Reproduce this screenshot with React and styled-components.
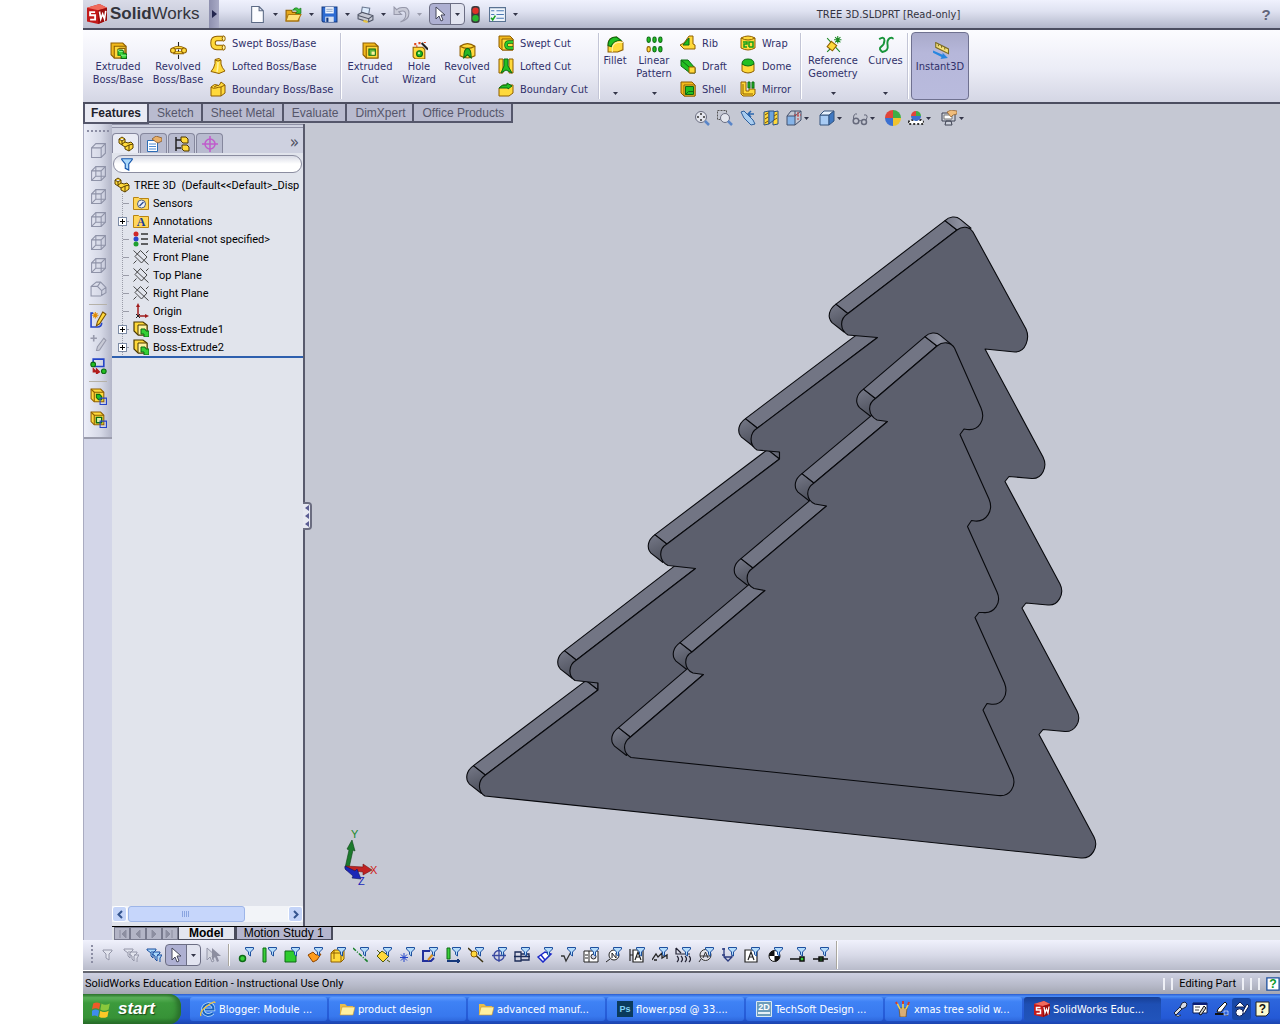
import styled, { createGlobalStyle, css } from "styled-components";

const GlobalStyle = createGlobalStyle`
  * {
    box-sizing: border-box;
  }
  body {
    margin: 0;
    background: #fff;
    font-family: "DejaVu Sans Condensed", "Liberation Sans", sans-serif;
    font-size: 11px;
    color: #000;
  }
  button, input {
    font: inherit;
    color: inherit;
    padding: 0;
    margin: 0;
    border: none;
    background: none;
  }
  svg {
    display: block;
    flex: none;
  }
`;

const Window = styled.div`
  min-height: 100vh;
  margin-left: 83px;
  display: flex;
  flex-direction: column;
  background: #c5c8d3;
`;

/* ---------- title bar ---------- */

const TitleBar = styled.header`
  display: flex;
  align-items: center;
  height: 30px;
  background: linear-gradient(#eff1fd, #dfe2f1 40%, #b3b7ca);
  border-bottom: 2px solid #4c4e60;
`;

const Brand = styled.div`
  display: flex;
  align-items: center;
  gap: 3px;
  width: 126px;
  height: 28px;
  padding-left: 4px;
  background: linear-gradient(#d9dbe8, #bfc2d2);
  font-family: "Liberation Sans", sans-serif;
  font-size: 17px;
  color: #33343c;
`;

const BrandArrow = styled.button`
  display: grid;
  place-items: center;
  width: 10px;
  height: 28px;
  background: linear-gradient(90deg, #8d8fae, #a9abc6);
`;

const QuickTools = styled.nav`
  display: flex;
  align-items: center;
  margin-left: 30px;
`;

const QuickButton = styled.button`
  display: flex;
  align-items: center;
  gap: 7px;
  width: ${(p) => (p.$plain ? 24 : 36)}px;
  padding-left: ${(p) => (p.$plain ? 2 : 0)}px;
`;

const SelectButton = styled.button`
  display: flex;
  align-items: center;
  width: 36px;
  height: 22px;
  border: 1px solid #6c6e84;
  border-radius: 4px;
  background: linear-gradient(90deg, #aeb0d2 20px, #6c6e84 20px, #6c6e84 21px, #e2e4f0 21px);
  padding-left: 2px;
  gap: 7px;
`;

const DocTitle = styled.h1`
  flex: 1;
  margin: 0;
  text-align: center;
  font-size: 11px;
  font-weight: normal;
  color: #333340;
`;

const HelpButton = styled.button`
  width: 28px;
  font-family: "Liberation Sans", sans-serif;
  font-size: 15px;
  font-weight: bold;
  color: #63657a;
`;

/* ---------- ribbon ---------- */

const Ribbon = styled.div`
  display: flex;
  height: 74px;
  padding-left: 5px;
  background: linear-gradient(#fcfcff, #ebecf6 55%, #d4d6e4);
  border-bottom: 2px solid #4c4e60;
  color: #30306a;
`;

const BigTool = styled.button`
  display: flex;
  flex-direction: column;
  align-items: center;
  gap: 1px;
  width: ${(p) => p.$width}px;
  padding: ${(p) => (p.$menu ? "6px 0 7px" : "12px 0 5px")};
  line-height: 13px;
  white-space: nowrap;
  ${(p) =>
    p.$pressed &&
    css`
      height: 68px;
      margin: 2px 0 0 2px;
      padding-top: 9px;
      border: 1px solid #6f7190;
      border-radius: 4px;
      background: linear-gradient(#a9aaca, #b6b7da 30%, #b9bbdd);
    `}
`;

const BigLabel = styled.span`
  flex: 1;
`;

const SmallTools = styled.div`
  display: flex;
  flex-direction: column;
  justify-content: center;
  width: ${(p) => p.$width}px;
  margin-left: ${(p) => p.$gap || 2}px;
`;

const SmallTool = styled.button`
  display: flex;
  align-items: center;
  gap: 6px;
  height: 23px;
  white-space: nowrap;
`;

const Divider = styled.i`
  width: 2px;
  margin: 3px 0;
  background: linear-gradient(90deg, #c3c5d6 1px, #fff 1px);
`;

/* ---------- command tabs ---------- */

const CommandRow = styled.div`
  display: flex;
  height: 20px;
`;

const CommandTabs = styled.nav`
  display: flex;
  width: 611px;
  font-family: "Liberation Sans", sans-serif;
  font-size: 12px;
`;

const CommandTab = styled.button`
  height: ${(p) => (p.$active ? 20 : 19)}px;
  padding: 0 7px 0 8px;
  border: solid #55576b;
  border-width: 0 2px 2px 0;
  background: ${(p) => (p.$active ? "#e9eaf3" : "#b9bbcf")};
  color: ${(p) => (p.$active ? "#22222c" : "#55566a")};
  font-weight: ${(p) => (p.$active ? "bold" : "normal")};
  white-space: nowrap;
  &:first-child {
    border-left-width: 2px;
    padding: 0 6px;
  }
`;

const ViewTools = styled.div`
  display: flex;
  margin-top: 5px;
`;

const ViewTool = styled.button`
  display: flex;
  align-items: center;
  gap: 2px;
  height: 18px;
  width: ${(p) => (p.$menu ? 33 : 23)}px;
`;

/* ---------- workspace ---------- */

const Workspace = styled.div`
  display: flex;
  flex: 1;
`;

const SideBar = styled.aside`
  width: 29px;
  background: #d3d6e8;
  border-left: 1px solid #a9abc0;
`;

const SideTools = styled.div`
  display: flex;
  flex-direction: column;
  align-items: center;
  height: 315px;
  padding-top: 6px;
  background: linear-gradient(90deg, #eceef8, #d5d8e6 60%, #b3b6c8);
  border-bottom: 2px solid #9b9dad;
`;

const Grip = styled.i`
  width: 22px;
  height: 2px;
  margin-bottom: 7px;
  background: repeating-linear-gradient(90deg, #8c8ea4 0 2px, transparent 2px 4px);
`;

const SideTool = styled.button`
  display: grid;
  place-items: center;
  height: 23px;
  width: 23px;
`;

const SideRule = styled.i`
  width: 18px;
  height: 1px;
  margin: 4px 0 3px;
  background: #b5b1a8;
`;

const Main = styled.div`
  display: flex;
  flex-direction: column;
  flex: 1;
  min-width: 0;
`;

const Split = styled.div`
  display: flex;
  flex: 1;
`;

const Panel = styled.section`
  position: relative;
  display: flex;
  flex-direction: column;
  width: 193px;
  background: #e1e4ec;
  border-right: 2px solid #585a6c;
`;

const PanelTabs = styled.div`
  display: flex;
  align-items: flex-end;
  height: 29px;
  border-top: 4px double #8f91a6;
  background: #ced1e0;
`;

const PanelTab = styled.button`
  display: grid;
  place-items: center;
  width: 27px;
  height: 20px;
  margin-right: 1px;
  border: 1px solid #85879d;
  border-bottom: none;
  border-radius: 4px 4px 0 0;
  background: ${(p) => (p.$active ? "#e9ebf4" : "#b8bbcf")};
`;

const MoreButton = styled.button`
  margin-left: auto;
  padding-right: 4px;
  font-size: 17px;
  line-height: 22px;
  color: #505264;
`;

const FilterBox = styled.label`
  display: flex;
  align-items: center;
  height: 18px;
  margin: 2px 1px 3px;
  padding: 0 6px;
  border: 1px solid #8b8da0;
  border-radius: 9px;
  background: linear-gradient(#d9dbe6, #fff 50%);
  input {
    flex: 1;
    min-width: 0;
    outline: none;
  }
`;

const Tree = styled.ul`
  margin: 0;
  padding: 0;
  list-style: none;
  border-bottom: 2px solid #2d5fae;
  font-family: Roboto, "Liberation Sans", sans-serif;
`;

const TreeRow = styled.li`
  display: flex;
  align-items: center;
  gap: 4px;
  height: 18px;
  padding-left: ${(p) => (p.$root ? 2 : 6)}px;
  white-space: pre;
`;

const Branch = styled.span`
  display: grid;
  align-items: center;
  align-self: stretch;
  width: 11px;
  background:
    linear-gradient(#9a9ca8, #9a9ca8) 5px 50% / 6px 1px no-repeat,
    repeating-linear-gradient(#9a9ca8 0 1px, transparent 1px 2px) 4px 0 / 1px 100% no-repeat;
`;

const Expander = styled.button`
  display: grid;
  place-items: center;
  width: 9px;
  height: 9px;
  border: 1px solid #7c8ba5;
  background: #fff;
`;

const ScrollRow = styled.div`
  display: flex;
  height: 16px;
  margin-top: auto;
  margin-bottom: 4px;
  background: #f2f4f8;
`;

const ScrollButton = styled.button`
  display: grid;
  place-items: center;
  width: 15px;
  border: 1px solid #fff;
  border-radius: 3px;
  background: #c4d4f8;
  &:last-child {
    margin-left: auto;
  }
`;

const ScrollThumb = styled.button`
  display: grid;
  place-items: center;
  flex: 0 0 61%;
  margin-left: 1px;
  border: 1px solid #9db5e8;
  border-radius: 3px;
  background: #c6d6fb;
`;

const PanelHandle = styled.button`
  position: absolute;
  right: -9px;
  top: calc(50% - 23px);
  display: grid;
  place-items: center;
  width: 9px;
  height: 28px;
  border: 2px solid #6b6d80;
  border-left: none;
  border-radius: 0 4px 4px 0;
  background: #e6e8f1;
`;

const Viewport = styled.main`
  flex: 1;
  min-width: 0;
  svg {
    width: 100%;
    height: 100%;
  }
`;

const SheetRow = styled.nav`
  display: flex;
  height: 14px;
  border-top: 1px solid #000;
  background: #dfe2e8;
  font-family: "Liberation Sans", sans-serif;
  font-size: 12px;
  line-height: 12px;
`;

const SheetArrow = styled.button`
  display: grid;
  place-items: center;
  width: 16px;
  border: 1px solid #77798c;
  background: #b3b5c6;
  &:first-child {
    margin-left: 2px;
  }
`;

const SheetTab = styled.button`
  padding: 0 ${(p) => (p.$active ? 10 : 7)}px;
  border: solid #4a4c5c;
  border-width: 0 2px 1px 1px;
  background: ${(p) => (p.$active ? "#e4e6f0" : "#b5b6ce")};
  font-weight: ${(p) => (p.$active ? "bold" : "normal")};
  line-height: 13px;
`;

/* ---------- bottom bars ---------- */

const FilterBar = styled.div`
  display: flex;
  align-items: center;
  height: 31px;
  padding-left: 8px;
  background: linear-gradient(#f0f1fc, #d8dae8 50%, #b8bbca);
  border-bottom: 1px solid #fff;
`;

const VerticalGrip = styled.i`
  width: 2px;
  height: 20px;
  margin-right: 3px;
  background: repeating-linear-gradient(#8c8ea4 0 2px, transparent 2px 4px);
`;

const FilterTool = styled.button`
  display: grid;
  place-items: center;
  width: 23px;
  height: 23px;
`;

const BarRule = styled.i`
  width: 2px;
  height: ${(p) => p.$height}px;
  margin: 0 4px;
  background: linear-gradient(90deg, #aaa79f 1px, #fff 1px);
`;

const StatusBar = styled.footer`
  display: flex;
  align-items: center;
  height: 23px;
  padding-left: 2px;
  border-top: 2px solid #63656f;
  background: linear-gradient(#cdd0e2, #b6b9c8 60%, #a3a6b2);
  font-family: Roboto, "Liberation Sans", sans-serif;
  white-space: nowrap;
`;

const StatusCells = styled.div`
  display: flex;
  align-items: center;
  gap: 6px;
  margin-left: auto;
`;

const StatusRule = styled.i`
  width: 2px;
  height: 12px;
  background: #eef0f6;
`;

const TaskBar = styled.nav`
  display: flex;
  height: 30px;
  padding-right: 8px;
  background: linear-gradient(#2a5bd0, #4a8cf5 8%, #2d66dd 18%, #2459d6 80%, #1b44ae);
  color: #fff;
`;

const StartButton = styled.button`
  display: flex;
  align-items: center;
  gap: 7px;
  width: 98px;
  margin-right: 9px;
  padding: 0 0 0 9px;
  border-radius: 0 12px 12px 0;
  background: linear-gradient(#2f7b2f, #5cb25a 12%, #3c9a3c 30%, #379237 80%, #256a26);
  box-shadow: inset -4px 0 5px #2a6f2b;
  font-family: "Liberation Sans", sans-serif;
  font-size: 17px;
  font-weight: bold;
  font-style: italic;
  text-shadow: 1px 1px 1px #1c4a1c;
`;

const Task = styled.button`
  display: flex;
  align-items: center;
  gap: 3px;
  flex: 0 1 137px;
  height: 24px;
  margin: 3px 2px 0 0;
  padding-left: 10px;
  border-radius: 3px;
  white-space: nowrap;
  background: ${(p) =>
    p.$active
      ? "linear-gradient(#173f95, #1e4fb4 30%, #2154bb)"
      : "linear-gradient(#5f9bff, #3f82f5 20%, #3878ee 80%, #2e68dc)"};
`;

const Tray = styled.div`
  display: flex;
  align-items: center;
  justify-content: space-between;
  width: 102px;
  margin-left: auto;
`;

const TrayButton = styled.button`
  display: grid;
  place-items: center;
  width: 19px;
  height: 22px;
  border-radius: 3px;
  background: ${(p) => (p.$pressed ? "#1847a5" : "none")};
`;

/* ---------- icons, drawn on a 16 x 16 grid ---------- */

const gold = "#ffd93b";
const goldDark = "#8f5f00";
const green = "#22c022";
const greenDark = "#0c6a14";

const block = (
  <>
    <path d="M1 1h11l3 3v11H4l-3-3z" fill="#f2b91c" stroke={goldDark} />
    <path d="M4 4h11v11H4z" fill={gold} stroke={goldDark} />
  </>
);

const wireCube = (
  <path d="M1.500 5.500h9v9h-9zM1.500 5.500l4-4h9v9l-4 4M10.500 5.500l4-4" fill="none" stroke="#8f93a8" />
);

const funnel = (
  <path d="M7.500.5h8v1.500l-3 3v4l-2-1.500v-2.500l-3-3z" fill="#b4dcfb" stroke="#1c4f9e" />
);

const cursor = (
  <path d="M4 1v12l3-3 2 5 2-1-2-5h4z" fill="#fff" stroke="#44465a" />
);

const part = (
  <path
    d="M1 3l3-2 3 2v3l3 1 3-1 2 2v4l-4 3-4-2V11L4 9 1 7z M1 3l3 2 3-2M4 5v4M7 6l-3 2M7 11l4-2 4-1M11 9v6"
    fill={gold}
    stroke="#5c4200"
  />
);

const pictures = {
  brand: (
    <>
      <path d="M0 3l10-3 6 3v10l-7 3-9-2z" fill="#c31a1a" />
      <path d="M0 3l10-3 6 3-7 2z" fill="#f06a5c" />
      <path d="M9 5l7-2v10l-7 3z" fill="#9a0d0d" />
      <path d="M6.500 6.500h-4v2.500h4v3.500h-4" fill="none" stroke="#fff" strokeWidth="1.500" />
      <path d="M10 6l1 6 1.500-4 1.500 4 1-6.500" fill="none" stroke="#fff" strokeWidth="1.300" />
    </>
  ),
  page: <path d="M2.500.5h7l4 4v11h-11zM9.500.5v4h4" fill="#fbfcff" stroke="#5c6a85" />,
  open: (
    <>
      <path d="M1 4h5l1 2h6v8H1z" fill="#e7a91c" stroke="#8f5f00" />
      <path d="M3 8h12l-3 6H1z" fill="#ffe27a" stroke="#b07a10" />
      <path d="M7 4q3-4 6-1l2-1v5h-5l1.500-2Q10 3 7 4z" fill="#3ac13a" stroke={greenDark} strokeWidth=".6" />
    </>
  ),
  save: (
    <>
      <path d="M1 1h14v14H2l-1-1z" fill="#2d6bd2" stroke="#153a80" />
      <path d="M4 1h8v6H4z" fill="#f5f8ff" />
      <path d="M5 3h6M5 5h6" stroke="#8ba2c8" />
      <path d="M4 10h8v5H4z" fill="#d6dff0" />
      <path d="M5 11h2v4H5z" fill="#153a80" />
    </>
  ),
  print: (
    <>
      <path d="M4 7l1-6 7 1-1 6z" fill="#dcebfc" stroke="#6a7890" />
      <path d="M1 8l4-2 10 3v4l-4 2-10-3z" fill="#c5c9d4" stroke="#4f5566" />
      <path d="M1 9l10 3 4-3M11 12v3" fill="none" stroke="#4f5566" />
      <path d="M6 14l4 1" stroke="#e7c440" strokeWidth="2" />
    </>
  ),
  undo: (
    <path d="M1 1v7h7L5.500 5.500Q12 3 12 8t-5 7q8-2 8-8T10 1.500Q6 1 3.500 3.500z" fill="#c9cbd8" stroke="#9698aa" />
  ),
  cursor,
  traffic: (
    <>
      <rect x="4" y="0" width="8" height="16" rx="3" fill="#3a3a3c" />
      <circle cx="8" cy="4.500" r="3" fill="#e03028" />
      <circle cx="8" cy="11.500" r="3" fill="#29b52f" />
    </>
  ),
  options: (
    <>
      <path d="M.5 1.500h15v13H.5z" fill="#eef4fb" stroke="#597292" />
      <path d="M7 4.500h7M7 8h7M7 11.500h7M2 4.500h3M2 8h3" stroke="#4b79b4" />
      <path d="M2 11l1.500 2L6 9" fill="none" stroke="#19a01f" strokeWidth="1.500" />
    </>
  ),
  extrude: (
    <>
      {block}
      <path d="M7 7l2-1h5v5" fill="#fff3a0" stroke={goldDark} />
      <path d="M7.500 7.500h4l1 1v2h2l1 1v4h-5v-3h-3z" fill="#35d035" stroke={greenDark} />
      <path d="M7.500 7.500l1.500 1.500h3M10.500 12l1 1h4" stroke="#8af08a" fill="none" />
    </>
  ),
  revolve: (
    <>
      <path d="M3 6.500q5-3 10 0M3 10h10" fill="none" stroke={goldDark} strokeWidth="3" />
      <path d="M3 6.500q5-3 10 0M4 9.800h8" fill="none" stroke={gold} strokeWidth="1.500" />
      <circle cx="2.800" cy="8" r="2.300" fill={gold} stroke={goldDark} />
      <circle cx="13.200" cy="8" r="2.300" fill={gold} stroke={goldDark} />
      <path d="M8 0v4M8 7v2M8 12v4" stroke="#222" />
    </>
  ),
  sweep: (
    <>
      <path d="M14 3.500H7Q3 3.500 3 8t4 4.500h7" fill="none" stroke={goldDark} strokeWidth="5.500" />
      <path d="M14 3.500H7Q3 3.500 3 8t4 4.500h7" fill="none" stroke={gold} strokeWidth="3.500" />
      <ellipse cx="13.700" cy="3.500" rx="1.500" ry="2.500" fill="#fff2a5" stroke={goldDark} />
      <ellipse cx="13.700" cy="12.500" rx="1.500" ry="2.500" fill="#fff2a5" stroke={goldDark} />
    </>
  ),
  loft: (
    <>
      <path d="M5 1.500l4-1 2 1.500v4q1 4 4 7l-6 2.500-8-2q3-3 4-8z" fill={gold} stroke={goldDark} />
      <path d="M5 2l3 1 3-1" fill="none" stroke={goldDark} />
      <path d="M8 4q0 6-1 10" fill="none" stroke="#fff3a0" strokeWidth="1.500" />
    </>
  ),
  boundary: (
    <>
      <path d="M1 6q4-4 6-2t4-3l4 3v8l-4 3H1z" fill={gold} stroke={goldDark} />
      <path d="M1 6q2 2 5 1t5-1l4-2M11 6v9M4 6l4-2" fill="none" stroke={goldDark} />
    </>
  ),
  cut: (
    <>
      {block}
      <path d="M6.500 6.500h6v6h-6z" fill="#62b83c" stroke={greenDark} />
      <path d="M9 9h3v3H9z" fill="#fff3a0" />
    </>
  ),
  hole: (
    <>
      <path d="M2 5h9l2 2v9H4l-2-2z" fill={gold} stroke={goldDark} />
      <circle cx="8" cy="11" r="2.800" fill={green} stroke={greenDark} />
      <circle cx="7.500" cy="10.500" r="1" fill="#c8f5a8" />
      <path d="M10 1l6 6" stroke="#222" strokeWidth="2" />
      <path d="M3 2h2M7 1h2M5 4h1M12 0h2" stroke="#e04a1c" strokeWidth="2" />
    </>
  ),
  revcut: (
    <>
      <path d="M1 4q7-5 14 0v9q-7 4-14 0z" fill={gold} stroke={goldDark} />
      <path d="M1 4q7 4 14 0" fill="none" stroke={goldDark} />
      <path d="M4.500 15q0-9 3.500-9t3.500 9L8 12z" fill="#27b827" stroke={greenDark} />
    </>
  ),
  sweepcut: (
    <>
      {block}
      <path d="M15 7h-4q-3 0-3 3t3 3h4" fill="none" stroke={greenDark} strokeWidth="3.500" />
      <path d="M15 7h-4q-3 0-3 3t3 3h4" fill="none" stroke="#2ccc2c" strokeWidth="2" />
    </>
  ),
  loftcut: (
    <>
      <path d="M1 1h4v14H1zM11 1h4v14h-4z" fill={gold} stroke={goldDark} />
      <path d="M6 1h4v7l4 7-6-3-5 3 3-7z" fill={green} stroke={greenDark} />
    </>
  ),
  boundcut: (
    <>
      <path d="M1 7l4-3h10v8l-4 3H1z" fill={gold} stroke={goldDark} />
      <path d="M1 7q3-4 8-3V2l5 3-4 3V7z" fill={green} stroke={greenDark} />
    </>
  ),
  fillet: (
    <>
      <path d="M1 15V8q0-7 8-7l6 5v7l-5 2z" fill={gold} stroke={goldDark} />
      <path d="M1 9q0-8 8-8l4 3q-7 0-9 6z" fill={green} stroke={greenDark} />
      <path d="M5 15v-3q0-5 5-6l5 0" fill="none" stroke="#fff3a0" />
    </>
  ),
  pattern: (
    <>
      {[1, 6.5, 12].map((x) => (
        <g key={x}>
          <rect x={x} y="1" width="3" height="5" rx="1.500" fill={green} stroke={greenDark} />
          <rect x={x} y="10" width="3" height="5" rx="1.500" fill={x === 1 ? gold : green} stroke={x === 1 ? goldDark : greenDark} />
        </g>
      ))}
    </>
  ),
  rib: (
    <>
      <path d="M9 1l4 0v8l2 1v4H4l-4-4 4-2z" fill={gold} stroke={goldDark} />
      <path d="M9 3v7H3z" fill={green} stroke={greenDark} />
    </>
  ),
  draft: (
    <>
      <path d="M1 2h7l7 8v5h-5L1 8z" fill={green} stroke={greenDark} />
      <path d="M9 9h6v6H9z" fill={gold} stroke={goldDark} />
      <path d="M1 2l8 7" stroke={greenDark} />
    </>
  ),
  shell: (
    <>
      {block}
      <path d="M5.500 5.500h8v8h-8z" fill={green} stroke={greenDark} />
      <path d="M5.500 13.500l3-3h5" fill="none" stroke={greenDark} />
    </>
  ),
  wrap: (
    <>
      <path d="M1 3q7-4 14 0v10q-7 4-14 0z" fill={gold} stroke={goldDark} />
      <path d="M1 3q7 4 14 0" fill="none" stroke={goldDark} />
      <path d="M3 7h4v2H4v3h3M9 12V7h4v5H9" fill="none" stroke="#15a01c" strokeWidth="1.500" />
    </>
  ),
  dome: (
    <>
      <path d="M2 6v7q6 4 12 0V6z" fill={gold} stroke={goldDark} />
      <path d="M2 6q0-5 6-5t6 5q-6 4-12 0z" fill={green} stroke={greenDark} />
    </>
  ),
  mirror: (
    <>
      <path d="M1 1h5v9h3v-2h6v5l-2 2H3l-2-2z" fill={gold} stroke={goldDark} />
      <path d="M8 1h2v6H8zM12 1h2v6h-2z" fill={green} stroke={greenDark} />
      <path d="M3 3v10h10" fill="none" stroke={goldDark} />
    </>
  ),
  refgeo: (
    <>
      <path d="M2 2l12 13M2 15l3-3" stroke="#1e8a26" />
      <path d="M6 5l5 4-4 5-5-4z" fill={gold} stroke={goldDark} />
      <path d="M12 0v7M8.500 3.500h7M9.500 1l5 5M14.500 1l-5 5" stroke="#1e8a26" />
    </>
  ),
  curves: <path d="M2 3q5-3 5 1t-3 6 1 5q6-1 5-6t2-7q3-1 3 1" fill="none" stroke="#18943a" strokeWidth="1.800" />,
  instant: (
    <>
      <path d="M3.500.5l12 6v4.500l-12-6z" fill="#f5e07a" stroke="#7a6a20" />
      <path d="M6 2v2M9 3.500v2M12 5v2" stroke="#7a6a20" />
      <path d="M1 8l9 4v-2l5 5-7 1 1-2-8-4z" fill="#2786e0" />
    </>
  ),
  zoomfit: (
    <>
      <circle cx="7" cy="7" r="5.500" fill="#e4e6ee" stroke="#6a6d80" />
      <path d="M7 3v2M7 9v2M3 7h2M9 7h2" stroke="#333" strokeWidth="1.500" />
      <path d="M11 11l4 4" stroke="#5a86c8" strokeWidth="2.500" />
    </>
  ),
  zoomarea: (
    <>
      <path d="M.5.5h9v9h-9z" fill="none" stroke="#555" strokeDasharray="2 1" />
      <circle cx="8" cy="8" r="4.500" fill="#e4e6ee" stroke="#6a6d80" />
      <path d="M11 11l4 4" stroke="#5a86c8" strokeWidth="2.500" />
    </>
  ),
  prevview: (
    <>
      <path d="M1 2l3-1 9 9 2 4-4 1-7-7z" fill="#a9cdf0" stroke="#2e5f9c" />
      <path d="M14 4H9M11 1L8 4l3 3" fill="none" stroke="#2b67b0" strokeWidth="1.500" />
    </>
  ),
  section: (
    <>
      <path d="M1 2l5-1v13l-5 1zM10 2l5-1v13l-5 1z" fill={gold} stroke="#2c5384" />
      <path d="M6 1h5v9l-5 4z" fill="#6ca4de" stroke="#2c5384" />
      <path d="M2 5l3-2M2 9l3-2M2 13l3-2M11 6l3-2M11 10l3-2" stroke="#7a5200" />
    </>
  ),
  orient: (
    <>
      <path d="M1 6h8v9H1z" fill="#86b4e8" stroke="#42506c" />
      <path d="M1 6l4-5h10v9l-6 5M9 6l6-5M9 1v5" fill="none" stroke="#42506c" />
      <path d="M12 2v8M8 5h7" stroke="#c23a3a" strokeDasharray="2 1" />
    </>
  ),
  display: (
    <>
      <path d="M1 5h9v10H1z" fill="#a9ccf4" stroke="#34547e" />
      <path d="M1 5l4-4h10l-5 4z" fill="#e6f1fd" stroke="#34547e" />
      <path d="M10 5l5-4v10l-5 4z" fill="#3f78c2" stroke="#34547e" />
    </>
  ),
  glasses: (
    <>
      <circle cx="4" cy="11" r="2.800" fill="none" stroke="#666a7c" strokeWidth="1.500" />
      <circle cx="12" cy="12" r="2.500" fill="none" stroke="#666a7c" strokeWidth="1.500" />
      <path d="M7 11q1-1 2.500 0M1.500 10Q1 3 5 4M14 10q3-6-2-5" fill="none" stroke="#666a7c" />
    </>
  ),
  ball: (
    <>
      <path d="M8 8V0a8 8 0 0 1 8 8z" fill="#3fae46" />
      <path d="M8 8h8a8 8 0 0 1-8 8z" fill="#f0c32e" />
      <path d="M8 8v8a8 8 0 0 1-8-8z" fill="#3b70d0" />
      <path d="M8 8H0a8 8 0 0 1 8-8z" fill="#e0453a" />
    </>
  ),
  scene: (
    <>
      <path d="M0 12l3-2h10l3 2v2H0z" fill="#fff" stroke="#333" strokeDasharray="2 2" strokeWidth="2" />
      <path d="M8 6V1a5 5 0 0 1 5 5z" fill="#3fae46" />
      <path d="M8 6h5a5 5 0 0 1-10 0z" fill="#3b70d0" />
      <path d="M8 6H3a5 5 0 0 1 5-5z" fill="#e0453a" />
    </>
  ),
  viewset: (
    <>
      <path d="M1 3h13v8H1zM4 15h7l-1-4H5z" fill="#cfd3dd" stroke="#3e4252" />
      <path d="M3 5h8v4H3z" fill="#fff" stroke="#777" />
      <path d="M6 2l4-2 6 1v3l-4 1-2 2z" fill="#f0bd7c" stroke="#8a5a28" strokeWidth=".7" />
    </>
  ),
  wire: wireCube,
  wireInner: (
    <>
      {wireCube}
      <path d="M5.500 1.500v9h9M5.500 10.500l-4 4" fill="none" stroke="#8f93a8" />
    </>
  ),
  iso: <path d="M1 6l5-4h4l5 5v5l-5 3H1zM1 6h6l4 4v5M7 6l3-4M11 10l4-3" fill="none" stroke="#8f93a8" />,
  sketch: (
    <>
      <path d="M3 2H1v13h6q4 0 4-4" fill="none" stroke="#2444c8" strokeWidth="1.500" />
      <path d="M12 1l3 2-6 9-3 2 1-4z" fill={gold} stroke="#7a5200" />
      <path d="M5 1v6M2 4h6M3 2l4 4M7 2L3 6" stroke="#e08a00" />
    </>
  ),
  addpencil: (
    <>
      <path d="M13 4l2 2-6 9-3 1 1-4z" fill="#c8cad6" stroke="#989aac" />
      <path d="M3.500 1v6M.5 4h6" stroke="#989aac" strokeWidth="1.500" />
    </>
  ),
  relations: (
    <>
      <path d="M3 5V2h10v7H4" fill="none" stroke="#2444c8" strokeWidth="1.500" />
      <circle cx="3" cy="7" r="2.200" fill={green} stroke={greenDark} />
      <path d="M3 10v4h4M6 11l3 3-3 2z" fill="#b01818" stroke="#b01818" />
      <circle cx="13" cy="13.500" r="2.200" fill={green} stroke={greenDark} />
    </>
  ),
  featA: (
    <>
      <path d="M1 1h9l3 3v9H4l-3-3z" fill={gold} stroke={goldDark} />
      <path d="M4 4h9M4 4v9M1 1l3 3" fill="none" stroke={goldDark} />
      <path d="M6 6h3l2 2v3H8L6 9z" fill={green} stroke={greenDark} />
      <path d="M9.500 9.500h6v6h-6z" fill="none" stroke="#2444c8" />
    </>
  ),
  featB: (
    <>
      <path d="M1 1h9l3 3v9H4l-3-3z" fill={gold} stroke={goldDark} />
      <path d="M4 4h9M4 4v9M1 1l3 3" fill="none" stroke={goldDark} />
      <path d="M6 6h5v5H6z" fill="#d9f0a8" stroke={greenDark} strokeWidth="1.300" />
      <path d="M9.500 9.500h6v6h-6z" fill="none" stroke="#2444c8" />
    </>
  ),
  part,
  props: (
    <>
      <path d="M1.500 4.500h10v11h-10z" fill="#fff" stroke="#2c6cb4" />
      <path d="M3 8h7M3 10.500h7M3 13h7" stroke="#4b8ad4" />
      <path d="M6 3l4-3 6 2v3l-4 2-2-1z" fill="#e9b068" stroke="#7c4c1a" strokeWidth=".7" />
    </>
  ),
  config: (
    <>
      <path d="M2 1v14M2 4h5M2 12h5" fill="none" stroke="#222" strokeWidth="1.500" />
      <path d="M7 1h5l2 2v4H9L7 5zM8 9h5l2 2v4h-5l-2-2z" fill={gold} stroke="#4c3600" />
    </>
  ),
  target: (
    <>
      <circle cx="8" cy="8" r="5" fill="none" stroke="#c05ccc" strokeWidth="1.500" />
      <path d="M8 0v16M0 8h16" stroke="#c05ccc" strokeWidth="1.500" />
    </>
  ),
  funnelBlue: <path d="M2 2h12v1l-4 5v7l-4-2V8L2 3z" fill="#a9d8fb" stroke="#1656ac" strokeWidth="1.300" />,
  sensors: (
    <>
      <path d="M.5 2.500h5l1 1h9v11H.5z" fill="#ffd75a" stroke="#b98410" />
      <circle cx="8.500" cy="9" r="4" fill="#eef3fb" stroke="#4f5d78" />
      <path d="M6.500 11l4-4" stroke="#2c4c94" strokeWidth="1.500" />
    </>
  ),
  annotations: (
    <>
      <path d="M.5 2.500h5l1 1h9v11H.5z" fill="#ffd75a" stroke="#b98410" />
      <text x="8" y="13" textAnchor="middle" fontFamily="Liberation Serif" fontWeight="bold" fontSize="12" fill="#1b3c98">A</text>
    </>
  ),
  material: (
    <>
      <circle cx="3" cy="3" r="2.500" fill="#d02828" />
      <circle cx="3" cy="8" r="2.500" fill="#2c48cc" />
      <circle cx="3" cy="13" r="2.500" fill="#20a030" />
      <path d="M8 3h7M8 8h7M8 13h7" stroke="#333" strokeWidth="1.500" />
    </>
  ),
  plane: (
    <path d="M7.500 1.500l6.500 6.500-5.500 6L2 7.500zM.5 1.500l15 14M13 4l2.500-2.500M.5 14.500l3-3" fill="none" stroke="#333" strokeWidth=".9" />
  ),
  origin: (
    <>
      <path d="M5 13V3M5 13h8" stroke="#a01c1c" strokeWidth="1.500" />
      <path d="M3 4l2-4 2 4zM12 11l4 2-4 2z" fill="#a01c1c" />
      <path d="M3 11l4 4M7 11l-4 4" stroke="#222" />
    </>
  ),
  boss: (
    <>
      <path d="M1 1h9l4 3v10H5l-4-4z" fill={gold} stroke="#4c3a00" strokeWidth="1.200" />
      <path d="M5 4h9v10H5z" fill="#fff2a0" stroke="#4c3a00" />
      <path d="M8 8h4l1 2h3v6h-5v-3H8z" fill="#35d035" stroke={greenDark} />
    </>
  ),
  windows: (
    <>
      <path d="M1 3q3-2 6 0L6 8Q3 6 0 8z" fill="#ef5a28" />
      <path d="M8 3q3 2 7 0l-1 5q-4 2-7 0z" fill="#8ac83c" />
      <path d="M0 9q3-2 6 0l-1 5q-3-2-6 0z" fill="#3f8cec" />
      <path d="M7 9q3 2 7 0l-1 5q-4 2-7 0z" fill="#fbc828" />
    </>
  ),
  explorer: (
    <>
      <path d="M13 12Q11 14 8 14 3 13 3 8.500T8.500 3Q13.500 3 13.500 8.500H5" fill="none" stroke="#bfe3ff" strokeWidth="3.500" />
      <path d="M13 12Q11 14 8 14 3 13 3 8.500T8.500 3Q13.500 3 13.500 8.500H5" fill="none" stroke="#1560c0" strokeWidth="2" />
      <path d="M1 15Q-1 11 7 5t8-3" fill="none" stroke="#f2c53c" strokeWidth="1.300" />
    </>
  ),
  folder: (
    <>
      <path d="M1 3h5l2 2h6v9H1z" fill="#e9bd4a" />
      <path d="M3 6h13l-2 8H1z" fill="#fff0a0" stroke="#c9962a" strokeWidth=".6" />
    </>
  ),
  photoshop: (
    <>
      <path d="M0 0h16v16H0z" fill="#0a3a5c" />
      <text x="8" y="11" textAnchor="middle" fontFamily="Liberation Sans" fontWeight="bold" fontSize="9" fill="#7fd0f4">Ps</text>
    </>
  ),
  design: (
    <>
      <path d="M.5.5h15v15H.5z" fill="#6c9cba" stroke="#d8e8f2" />
      <text x="8" y="9" textAnchor="middle" fontFamily="Liberation Sans" fontWeight="bold" fontSize="9" fill="#fff">2D</text>
      <path d="M2 12h12" stroke="#e6f0f6" strokeWidth="2" />
    </>
  ),
  paint: (
    <>
      <path d="M4 7h8l-1 9H5z" fill="#d8ad74" stroke="#6c4a20" strokeWidth=".7" />
      <path d="M5 8L2 2M8 8V1M11 8l3-6" stroke="#f2d24c" strokeWidth="1.600" />
      <path d="M2 3l-1-2M8 3V0M13 4l1-3" stroke="#d43c2c" strokeWidth="2" />
    </>
  ),
  mic: <path d="M10 2l3-1 2 2-1 3-4 2-2-2zM8 6l2 2-6 6-2-2zM3 14q3 3 6 0" fill="#d9dce4" stroke="#1a2440" />,
  card: (
    <>
      <path d="M1 2h14v10H1z" fill="#fff" stroke="#0b1d55" />
      <path d="M1 2h14v2H1z" fill="#0b1d75" />
      <path d="M3 6h5M3 9h4" stroke="#444" />
      <path d="M12 5l2 2-5 7-2-1z" fill="#ccc" stroke="#111" />
    </>
  ),
  pen: (
    <>
      <path d="M2 13h9l4 1" stroke="#111" fill="none" strokeWidth="2" />
      <path d="M12 1l2 2-6 8H4l1-3z" fill="#fff" stroke="#111" />
      <path d="M11 10h4v4h-4z" fill="#2a62e0" stroke="#fff" strokeWidth=".6" />
    </>
  ),
  speech: (
    <>
      <path d="M1 6l5-5 5 5zM13 3l2 2-5 8-2-1z" fill="#fff" stroke="#0b1d55" />
      <circle cx="5.500" cy="11.500" r="3.700" fill="#fff" stroke="#0b1d55" />
    </>
  ),
  help: (
    <>
      <path d="M1 1h13v11l-3 3H1z" fill="#fdfbd0" stroke="#222" />
      <text x="7.500" y="12" textAnchor="middle" fontFamily="Liberation Sans" fontWeight="bold" fontSize="12" fill="#111">?</text>
    </>
  ),
  statusHelp: (
    <>
      <path d="M1 1h14v14H1z" fill="#fff" stroke="#1c4f9e" strokeWidth="1.500" />
      <text x="8" y="13" textAnchor="middle" fontFamily="Liberation Sans" fontWeight="bold" fontSize="14" fill="#0a9a2a">?</text>
    </>
  ),
  funnelGrey: <path d="M3 3h9v1L9 7v6l-3-2V7L3 4z" fill="#e2e4ee" stroke="#9496a8" />,
  funnelsGrey: (
    <path d="M1 2h9v1L7 6v5L5 9V6L1 3zM5 5h9v1l-3 3v5l-2-2V9L6 7M11 8h5l-2 3v4" fill="#e2e4ee" stroke="#9496a8" />
  ),
  funnelsBlue: (
    <path d="M1 2h9v1L7 6v5L5 9V6L1 3zM5 5h9v1l-3 3v5l-2-2V9L6 7M11 8h5l-2 3v4" fill="#a9d8fb" stroke="#1c4f9e" />
  ),
  cursors: (
    <>
      <path d="M2 1v12l3-3 2 5 2-1-2-5h4z" fill="#d4d6e0" stroke="#9496a8" />
      <path d="M7 1v12l3-3 2 5 2-1-2-5h4z" fill="#8c8ea0" />
    </>
  ),
};

/* what each selection filter shows beside its funnel */
const filterMarks = [
  ["Vertices", <circle cx="4.500" cy="11.500" r="3" fill="#3ad03a" stroke={greenDark} strokeWidth="1.500" />],
  ["Edges", <path d="M2 1h3v14H2z" fill="#3ad03a" stroke={greenDark} />],
  ["Faces", <path d="M1 4h11v11H1z" fill="#2ecc2e" stroke={greenDark} />],
  ["Surface bodies", <path d="M1 8l5-3 3 3 5-1-4 6-4 2z" fill="#ff9c1c" stroke="#8f4500" />],
  ["Solid bodies", <path d="M1 6l3-3h10v9l-3 3H1zM1 6h10v9M4 3v9" fill={gold} stroke={goldDark} />],
  ["Axes", <path d="M0 1l15 14" stroke="#18802a" strokeWidth="1.500" strokeDasharray="4 1.500 1 1.500" />],
  ["Planes", <path d="M6 4l7 5-6 6-6-6zM1 3l3 3M11 13l3 2" fill={gold} stroke="#4c5a10" />],
  ["Sketch points", <path d="M5 6v9M1 10.500h8M2 7.500l6 6M8 7.500l-6 6" stroke="#2444c8" />],
  [
    "Sketches",
    <>
      <path d="M8 4H1v10h8l3-3" fill="none" stroke="#22309c" strokeWidth="2" />
      <path d="M12 6l-6 7" stroke="#d8901c" strokeWidth="2" />
    </>,
  ],
  [
    "Sketch segments",
    <>
      <path d="M2 14h13M13 12v4" fill="none" stroke="#15387c" strokeWidth="2" />
      <path d="M2 1h3v11H2z" fill="#3ad03a" stroke={greenDark} />
    </>,
  ],
  [
    "Midpoints",
    <>
      <path d="M0 1l15 14" stroke="#3b3210" strokeWidth="1.500" />
      <circle cx="6" cy="7" r="3" fill={gold} stroke="#8f5f00" />
    </>,
  ],
  ["Center marks", <path d="M8 2v13M1 8.500h14M3 8.500a5 5 0 1 0 10 0a5 5 0 1 0-10 0" fill="none" stroke="#3a48a0" strokeWidth="1.300" />],
  ["Centerlines", <path d="M1 5h6v9H1zM7 7h8v6H7M0 9.500h16" fill="none" stroke="#1c2c58" strokeWidth="1.300" />],
  ["Dimensions", <path d="M1 10l7-5 6 2-8 8zM4 8l4 5" fill="#fff" stroke="#1a28c8" strokeWidth="1.500" />],
  ["Surface finish", <path d="M1 9h3l2 5 6-11" fill="none" stroke="#333" strokeWidth="1.300" />],
  ["Geometric tolerances", <path d="M1 4h14v11H1zM6 4v11M2 8h3M2 11h3M8 9.500a2.500 2.500 0 1 0 5 0a2.500 2.500 0 1 0-5 0" fill="#fff" stroke="#222" />],
  ["Notes", <path d="M3 8a5 5 0 1 0 10 0a5 5 0 1 0-10 0M6 11V6l4 5V6M4 12l-4 3" fill="#fff" stroke="#222" />],
  ["Datums", <path d="M1 2v12M4 3h10v12H4zM6 13l3-8 3 8M7 10h4M1 8h3" fill="#fff" stroke="#222" strokeWidth="1.200" />],
  ["Weld symbols", <path d="M0 13l4-6 2 3 4-4v5l5-3v4M2 13h3" fill="none" stroke="#222" strokeWidth="1.300" />],
  ["Weld beads", <path d="M1 1v6h14M2 9q3 3 0 6M6 9q3 3 0 6M10 9q3 3 0 6M14 9q3 3 0 6M1 1l5 5" fill="none" stroke="#223" strokeWidth="1.200" />],
  ["Datum targets", <path d="M2 8a5.500 5.500 0 1 0 11 0a5.500 5.500 0 1 0-11 0M5 11l2.500-6 2.500 6M2 9h11M3 12l-2 3" fill="#e4e4e8" stroke="#333" />],
  ["Cosmetic threads", <path d="M3 1v9l4 4 4-4V1M1 2h3M3 10h8M1 8h3" fill="none" stroke="#2c3c80" strokeWidth="1.300" />],
  ["Blocks", <path d="M1 3h12v12H1zM4 13l3-8 3 8M5 10h4" fill="#fff" stroke="#222" strokeWidth="1.200" />],
  [
    "Mass center",
    <>
      <circle cx="7.500" cy="9" r="5.500" fill="#fff" stroke="#111" />
      <path d="M7.500 9V3.500A5.500 5.500 0 0 0 2 9zM7.500 9v5.500A5.500 5.500 0 0 0 13 9z" fill="#111" />
    </>,
  ],
  ["Connection points", <path d="M0 12h10M10 10h4v4h-4z" fill="#3ad03a" stroke="#111" strokeWidth="1.500" />],
  ["Routing points", <path d="M0 12h15M6 10h4v4H6z" fill="#3ad03a" stroke="#111" strokeWidth="1.500" />],
];

function Icon({ name, size = 16 }) {
  return (
    <svg width={size} height={size} viewBox="0 0 16 16" aria-hidden="true">
      {pictures[name]}
    </svg>
  );
}

function Caret({ color = "#333548" }) {
  return (
    <svg width="5" height="3" viewBox="0 0 5 3" aria-hidden="true">
      <path d="M0 0h5L2.500 3z" fill={color} />
    </svg>
  );
}

function Tool({ icon, width, menu, pressed, children }) {
  return (
    <BigTool $width={width} $menu={menu} $pressed={pressed}>
      <Icon name={icon} size={17} />
      <BigLabel>{children}</BigLabel>
      {menu && <Caret />}
    </BigTool>
  );
}

function ToolColumn({ items, width, gap }) {
  return (
    <SmallTools $width={width} $gap={gap}>
      {items.map(([icon, label]) => (
        <SmallTool key={label}>
          <Icon name={icon} />
          {label}
        </SmallTool>
      ))}
    </SmallTools>
  );
}

/* ---------- the model ---------- */

// both bodies are extruded along this vector, away from the viewer
const depth = [-12, -9.4];

const outer = {
  face: `M957 230C962 226 969 226 973 232L1026 329C1030 338 1026 352 1015 352L985 349
    L1043 457C1048 467 1042 479 1032 478.500L1009 476.500L1005 481.500
    L1060 584C1065 594 1058 606 1048 605L1026 603L1022 608
    L1077 711C1082 721 1075 732 1065 731.500L1043 729.500L1039 734.500
    L1094 837C1099 847 1092 859 1081 858L485 796
    C478 792 477 781 485.500 775L598 690V683L575 680.500
    C568 676 568 665 576.500 660L695.500 568.500L668 565.500
    C659 561 658 549 667 544L779.500 459V452L757 450
    C749 445 749 433 757.500 428L877.500 337.500L848 335
    C840 330 839 319 848 313.500Z`,
  tip: [957, 230],
  steps: [
    [848, 313.5, 957, 230],
    [757.5, 428, 877.5, 337.5],
    [667, 544, 779.5, 459],
    [576.5, 660, 695.5, 568.5],
    [485.5, 775, 598, 690],
  ],
  // short upright walls at the top of the third and the last branch
  walls: [
    [779.5, 459],
    [598, 690],
  ],
};

const inner = {
  face: `M937 346C943 341 951 342 954.500 348L981 408C986 420 979 431 967 429.500L964 429L960 434.500
    L989 499C994 511 986 522 975 521L971.500 520.500L967.500 526.500
    L997 592C1002 603 994 614 983 612.500L979 612.500L975 617.500
    L1004.500 683C1009 695 1002 706 990 704L987 703.500L983 710
    L1012.500 775C1017 786 1010 797 998 795.500L631 757.500
    C623 753 622 743 630.500 737L703.500 674.500L693 673
    C684 669 683 657 692 652L765 590.500L754 588.500
    C745 584 745 573 753 568L826.500 506L815 504
    C806 500 805 489 814 483L887.500 421.500L877 420
    C868 415 867 404 875.500 398.500Z`,
  tip: [937, 346],
  steps: [
    [875.5, 398.5, 937, 346],
    [814, 483, 887.5, 421.5],
    [753, 568, 826.5, 506],
    [692, 652, 765, 590.5],
    [630.5, 737, 703.5, 674.5],
  ],
  walls: [],
};

function Body({ face, tip, steps, walls }) {
  const [dx, dy] = depth;
  return (
    <g stroke="#08090d" strokeWidth="1.100" strokeLinejoin="round">
      {walls.map(([x, y]) => (
        <path key={y} d={`M${x} ${y}v-7l${dx} ${dy}v7z`} fill="#666977" />
      ))}
      {steps.map(([x, y, x2, y2]) => (
        <g key={y}>
          <path
            d={`M${x} ${y}l${dx} ${dy}c-7 5 -9 13 -4 18.500l12 9.400z`}
            fill="url(#round)"
          />
          <path d={`M${x} ${y}l${dx} ${dy}L${x2 + dx} ${y2 + dy}L${x2} ${y2}z`} fill="#727584" />
        </g>
      ))}
      <path
        d={`M${tip[0]} ${tip[1]}l${dx} ${dy}c4-4 11-5 15-1.500l11 9z`}
        fill="url(#tip)"
      />
      <path d={face} fill="#5c5f6d" />
    </g>
  );
}

function Model() {
  return (
    <svg viewBox="305 124 975 802" role="img" aria-label="Tree model">
      <defs>
        <linearGradient id="round" x1="0" y1="0" x2="0.300" y2="1">
          <stop offset="0" stopColor="#777a89" />
          <stop offset="1" stopColor="#4f525e" />
        </linearGradient>
        <linearGradient id="tip">
          <stop offset="0" stopColor="#747786" />
          <stop offset=".6" stopColor="#8d909f" />
          <stop offset="1" stopColor="#747786" />
        </linearGradient>
      </defs>
      <Body {...outer} />
      <Body {...inner} />
      <g fontFamily="Liberation Sans" fontSize="11">
        <path d="M345 868l4-18-2-1 5-9 3 11-2-1-4 18z" fill="#1c7a2c" stroke="#0e4416" strokeWidth=".6" />
        <path d="M346 866l17 1v-3l9 6-9 5v-3l-17-2z" fill="#c02222" stroke="#701010" strokeWidth=".6" />
        <path d="M345 866l10 5 2-2 4 10-9-1 1-2-8-7z" fill="#1b27b8" stroke="#0c1260" strokeWidth=".6" />
        <text x="351" y="838" fill="#1c8a2c">Y</text>
        <text x="370" y="874" fill="#d02020">X</text>
        <text x="358" y="885" fill="#1b27b8">Z</text>
      </g>
    </svg>
  );
}

const treeItems = [
  ["sensors", "Sensors"],
  ["annotations", "Annotations", true],
  ["material", "Material <not specified>"],
  ["plane", "Front Plane"],
  ["plane", "Top Plane"],
  ["plane", "Right Plane"],
  ["origin", "Origin"],
  ["boss", "Boss-Extrude1", true],
  ["boss", "Boss-Extrude2", true],
];

const viewTools = [
  ["zoomfit", "Zoom to fit"],
  ["zoomarea", "Zoom to area"],
  ["prevview", "Previous view"],
  ["section", "Section view"],
  ["orient", "View orientation", true],
  ["display", "Display style", true],
  ["glasses", "Hide or show items", true],
  ["ball", "Edit appearance"],
  ["scene", "Apply scene", true],
  ["viewset", "View settings", true],
];

const tasks = [
  ["explorer", "Blogger: Module ..."],
  ["folder", "product design"],
  ["folder", "advanced manuf..."],
  ["photoshop", "flower.psd @ 33...."],
  ["design", "TechSoft Design ..."],
  ["paint", "xmas tree solid w..."],
  ["brand", "SolidWorks Educ...", true],
];

const views = ["wire", "wireInner", "wireInner", "wireInner", "wireInner", "wireInner", "iso"];

const sheetArrows = [
  ["First", "M3 1v8M9 1L5 5l4 4z"],
  ["Previous", "M7 1L3 5l4 4z"],
  ["Next", "M3 1l4 4-4 4z"],
  ["Last", "M7 1v8M1 1l4 4-4 4z"],
];

function App() {
  return (
    <>
      <GlobalStyle />
      <Window>
        <TitleBar>
          <Brand>
            <Icon name="brand" size={20} />
            <span>
              <b>Solid</b>Works
            </span>
          </Brand>
          <BrandArrow aria-label="Show menus">
            <svg width="5" height="8" viewBox="0 0 5 8">
              <path d="M0 0l5 4-5 4z" fill="#23264e" />
            </svg>
          </BrandArrow>
          <QuickTools>
            {["page", "open", "save", "print", "undo"].map((name) => (
              <QuickButton key={name} aria-label={name}>
                <Icon name={name} size={17} />
                <Caret color={name === "undo" ? "#9a9cac" : undefined} />
              </QuickButton>
            ))}
            <SelectButton aria-label="Select">
              <Icon name="cursor" />
              <Caret />
            </SelectButton>
            <QuickButton $plain aria-label="Rebuild">
              <Icon name="traffic" size={17} />
            </QuickButton>
            <QuickButton aria-label="Options">
              <Icon name="options" size={17} />
              <Caret />
            </QuickButton>
          </QuickTools>
          <DocTitle>TREE 3D.SLDPRT [Read-only]</DocTitle>
          <HelpButton>?</HelpButton>
        </TitleBar>

        <Ribbon>
          <Tool icon="extrude" width={60}>Extruded<br />Boss/Base</Tool>
          <Tool icon="revolve" width={60}>Revolved<br />Boss/Base</Tool>
          <ToolColumn
            width={130}
            items={[["sweep", "Swept Boss/Base"], ["loft", "Lofted Boss/Base"], ["boundary", "Boundary Boss/Base"]]}
          />
          <Divider />
          <Tool icon="cut" width={56}>Extruded<br />Cut</Tool>
          <Tool icon="hole" width={42}>Hole<br />Wizard</Tool>
          <Tool icon="revcut" width={54}>Revolved<br />Cut</Tool>
          <ToolColumn
            width={100}
            gap={4}
            items={[["sweepcut", "Swept Cut"], ["loftcut", "Lofted Cut"], ["boundcut", "Boundary Cut"]]}
          />
          <Divider />
          <Tool icon="fillet" width={30} menu>Fillet</Tool>
          <Tool icon="pattern" width={48} menu>Linear<br />Pattern</Tool>
          <ToolColumn width={58} items={[["rib", "Rib"], ["draft", "Draft"], ["shell", "Shell"]]} />
          <ToolColumn width={60} items={[["wrap", "Wrap"], ["dome", "Dome"], ["mirror", "Mirror"]]} />
          <Divider />
          <Tool icon="refgeo" width={62} menu>Reference<br />Geometry</Tool>
          <Tool icon="curves" width={43} menu>Curves</Tool>
          <Divider />
          <Tool icon="instant" width={58} pressed>Instant3D</Tool>
        </Ribbon>

        <CommandRow>
          <CommandTabs>
            {["Features", "Sketch", "Sheet Metal", "Evaluate", "DimXpert", "Office Products"].map((tab, i) => (
              <CommandTab key={tab} $active={i === 0}>{tab}</CommandTab>
            ))}
          </CommandTabs>
          <ViewTools>
            {viewTools.map(([name, label, menu]) => (
              <ViewTool key={name} aria-label={label} $menu={menu}>
                <Icon name={name} />
                {menu && <Caret />}
              </ViewTool>
            ))}
          </ViewTools>
        </CommandRow>

        <Workspace>
          <SideBar>
            <SideTools>
              <Grip />
              {views.map((name, i) => (
                <SideTool key={i} aria-label={`View ${i + 1}`}><Icon name={name} size={17} /></SideTool>
              ))}
              <SideRule />
              <SideTool aria-label="Sketch"><Icon name="sketch" size={17} /></SideTool>
              <SideTool aria-label="3D sketch"><Icon name="addpencil" size={17} /></SideTool>
              <SideTool aria-label="Relations"><Icon name="relations" size={17} /></SideTool>
              <SideRule />
              <SideTool aria-label="Extrude from sketch"><Icon name="featA" size={17} /></SideTool>
              <SideTool aria-label="Cut from sketch"><Icon name="featB" size={17} /></SideTool>
            </SideTools>
          </SideBar>

          <Main>
            <Split>
              <Panel>
                <PanelTabs>
                  {["part", "props", "config", "target"].map((name, i) => (
                    <PanelTab key={name} aria-label={name} $active={i === 0}>
                      <Icon name={name} />
                    </PanelTab>
                  ))}
                  <MoreButton aria-label="More tabs">»</MoreButton>
                </PanelTabs>
                <FilterBox>
                  <Icon name="funnelBlue" size={14} />
                  <input type="text" aria-label="Filter tree" />
                </FilterBox>
                <Tree>
                  <TreeRow $root>
                    <Icon name="part" />
                    {"TREE 3D  (Default<<Default>_Disp"}
                  </TreeRow>
                  {treeItems.map(([icon, label, expandable]) => (
                    <TreeRow key={label}>
                      <Branch>
                        {expandable && (
                          <Expander aria-label={`Expand ${label}`}>
                            <svg width="5" height="5" viewBox="0 0 5 5">
                              <path d="M0 2.500h5M2.500 0v5" stroke="#000" />
                            </svg>
                          </Expander>
                        )}
                      </Branch>
                      <Icon name={icon} />
                      {label}
                    </TreeRow>
                  ))}
                </Tree>
                <ScrollRow>
                  <ScrollButton aria-label="Scroll left">
                    <svg width="6" height="9" viewBox="0 0 6 9">
                      <path d="M5 1L1.500 4.500 5 8" fill="none" stroke="#35558f" strokeWidth="2" />
                    </svg>
                  </ScrollButton>
                  <ScrollThumb aria-label="Scroll position">
                    <svg width="8" height="6" viewBox="0 0 8 6">
                      <path d="M.5 0v6M2.500 0v6M4.500 0v6M6.500 0v6" stroke="#8aa5e0" />
                    </svg>
                  </ScrollThumb>
                  <ScrollButton aria-label="Scroll right">
                    <svg width="6" height="9" viewBox="0 0 6 9">
                      <path d="M1 1l3.500 3.500L1 8" fill="none" stroke="#35558f" strokeWidth="2" />
                    </svg>
                  </ScrollButton>
                </ScrollRow>
                <PanelHandle aria-label="Collapse panel">
                  <svg width="4" height="22" viewBox="0 0 4 22">
                    <path d="M4 0v6L0 3zM4 8v6l-4-3zM4 16v6l-4-3z" fill="#5a5c92" />
                  </svg>
                </PanelHandle>
              </Panel>
              <Viewport>
                <Model />
              </Viewport>
            </Split>
            <SheetRow>
              {sheetArrows.map(([label, d]) => (
                <SheetArrow key={label} aria-label={label}>
                  <svg width="10" height="10" viewBox="0 0 10 10">
                    <path d={d} fill="#8c8ea0" stroke="#8c8ea0" />
                  </svg>
                </SheetArrow>
              ))}
              <SheetTab $active>Model</SheetTab>
              <SheetTab>Motion Study 1</SheetTab>
            </SheetRow>
          </Main>
        </Workspace>

        <FilterBar>
          <VerticalGrip />
          <FilterTool aria-label="Toggle filters"><Icon name="funnelGrey" /></FilterTool>
          <FilterTool aria-label="Clear filters"><Icon name="funnelsGrey" /></FilterTool>
          <FilterTool aria-label="Select all filters"><Icon name="funnelsBlue" /></FilterTool>
          <SelectButton aria-label="Select">
            <Icon name="cursor" />
            <Caret />
          </SelectButton>
          <FilterTool aria-label="Select other"><Icon name="cursors" /></FilterTool>
          <BarRule $height={22} />
          {filterMarks.map(([label, mark]) => (
            <FilterTool key={label} aria-label={label}>
              <svg width="16" height="16" viewBox="0 0 16 16">
                {mark}
                {funnel}
              </svg>
            </FilterTool>
          ))}
          <BarRule $height={28} />
        </FilterBar>

        <StatusBar>
          SolidWorks Education Edition - Instructional Use Only
          <StatusCells>
            <StatusRule />
            <StatusRule />
            Editing Part
            <StatusRule />
            <StatusRule />
            <StatusRule />
            <Icon name="statusHelp" size={14} />
          </StatusCells>
        </StatusBar>

        <TaskBar>
          <StartButton>
            <Icon name="windows" size={19} />
            start
          </StartButton>
          {tasks.map(([icon, label, active]) => (
            <Task key={label} $active={active}>
              <Icon name={icon} />
              {label}
            </Task>
          ))}
          <Tray>
            <TrayButton aria-label="Microphone"><Icon name="mic" /></TrayButton>
            <TrayButton aria-label="Tools"><Icon name="card" /></TrayButton>
            <TrayButton aria-label="Handwriting"><Icon name="pen" /></TrayButton>
            <TrayButton aria-label="Drawing pad" $pressed><Icon name="speech" /></TrayButton>
            <TrayButton aria-label="Help"><Icon name="help" /></TrayButton>
          </Tray>
        </TaskBar>
      </Window>
    </>
  );
}

export default App;
